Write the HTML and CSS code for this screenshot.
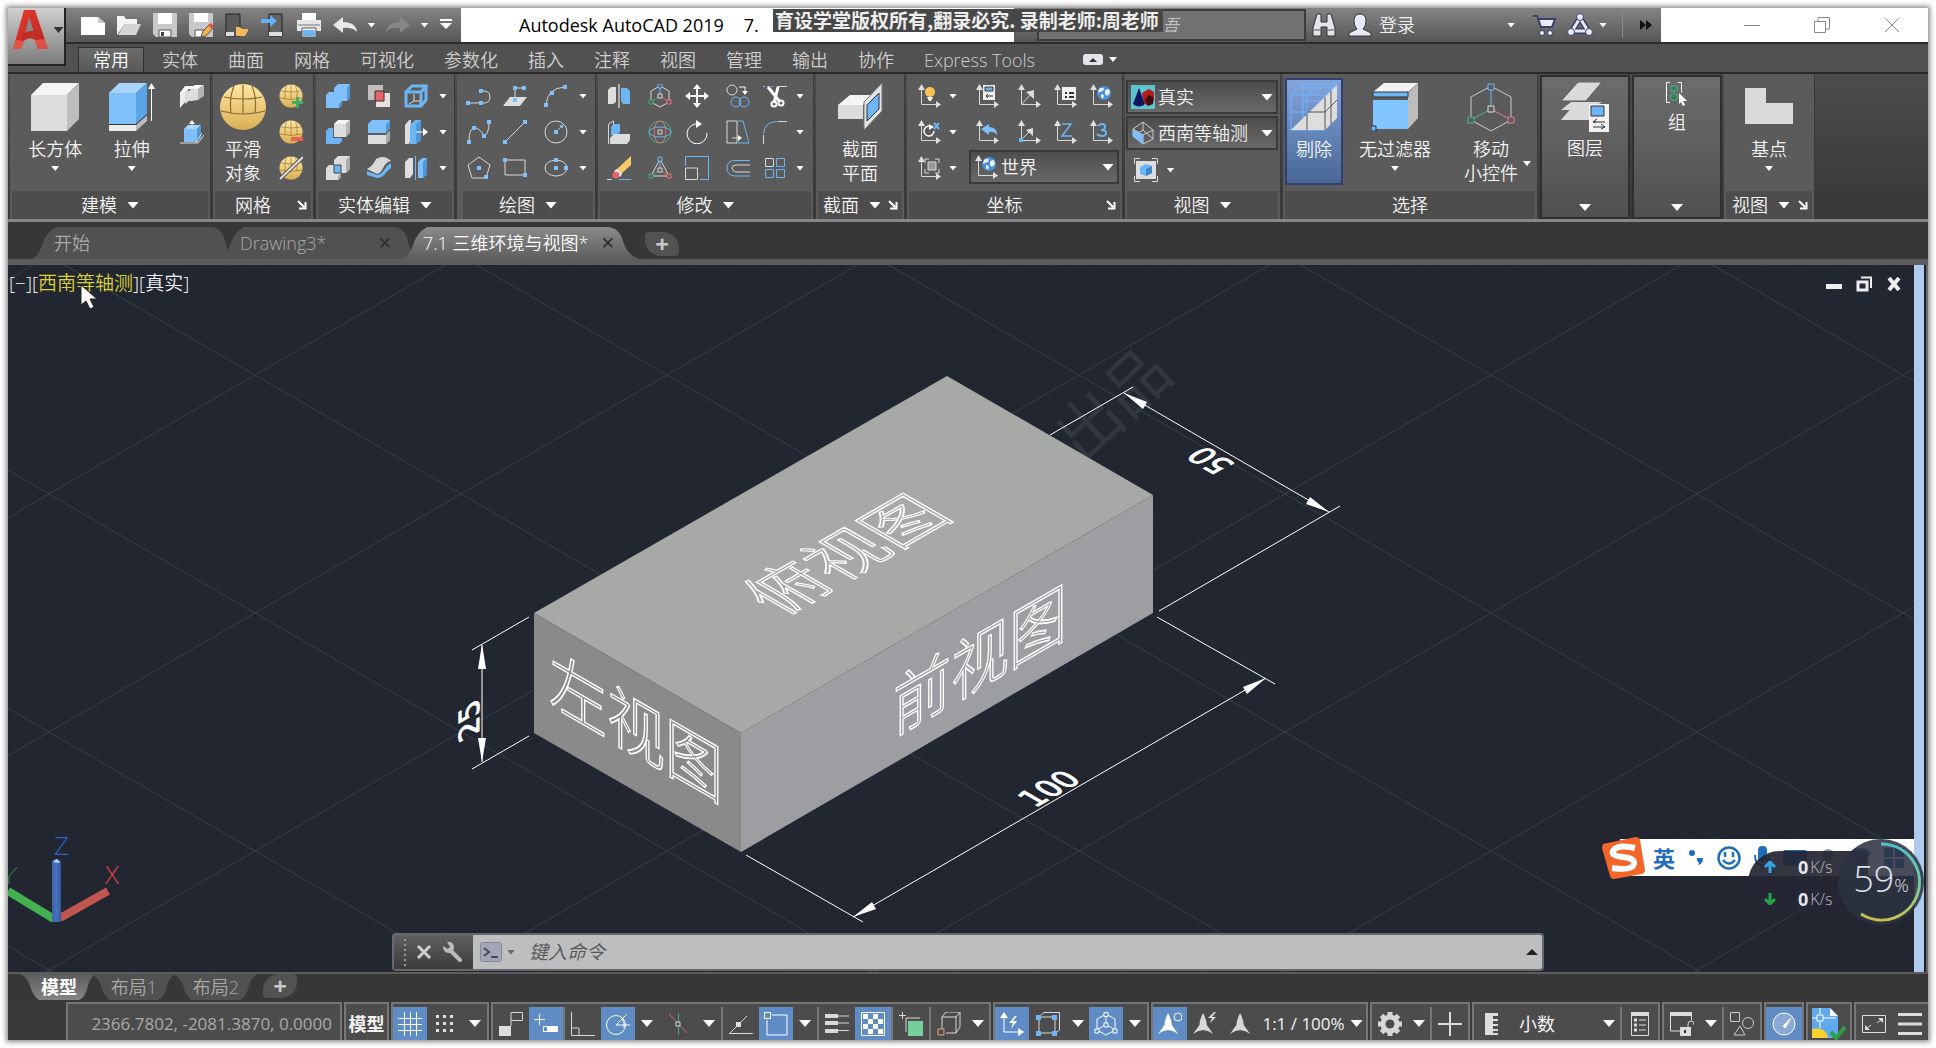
FILE: index.html
```html
<!DOCTYPE html>
<html lang="zh-CN">
<head>
<meta charset="utf-8">
<title>Autodesk AutoCAD 2019</title>
<link rel="stylesheet" href="styles.css">
</head>
<body>
<svg class="defs" aria-hidden="true">
  <defs>
    <linearGradient id="gold" x1="0" y1="0" x2="0" y2="1"><stop offset="0" stop-color="#ffe7a3"/><stop offset="1" stop-color="#d9ae52"/></linearGradient>
    <linearGradient id="redA" x1="0" y1="0" x2="1" y2="1"><stop offset="0" stop-color="#e8392d"/><stop offset="1" stop-color="#b3261e"/></linearGradient>
  </defs>
  <symbol id="sphere" viewBox="0 0 24 24"><circle cx="12" cy="12" r="11.5" fill="url(#gold)"/><g fill="none" stroke="#8a6c2c" stroke-width=".6"><path d="M1 14q11 3 22 0M2.500 7q9.500 2 19 0M12 1v14.500M7.500 1.500q-2.500 6-1.500 13.500M16.500 1.500q2.500 6 1.500 13.500"/></g></symbol>
  <symbol id="axes" viewBox="0 0 24 24"><path d="M4.500 4v16.500H20" fill="none" stroke="#d8d8d8"/><path d="M1 6l3.500-6L8 6zM19 17l5 3.500-5 3.500z" fill="#e0e0e0" stroke="none"/></symbol>
  <symbol id="globe" viewBox="0 0 14 14"><g stroke="none"><circle cx="7" cy="7" r="7" fill="#4a90d9"/><path d="M2 3q3-2 5-1l-1 3-3 1-2 1zM8 4l4-1 1 4-3 3-2-2zM4 8l3 1-1 4-2-2z" fill="#e8f2fc"/></g></symbol>
  <symbol id="launch" viewBox="0 0 10 10"><path d="M1 1l6 6M8.500 2v6.500H2" fill="none" stroke="#fff" stroke-width="2"/></symbol>
  <symbol id="annot" viewBox="0 0 24 24"><path d="M11 0q4 8 4 13l7 10q-5-4-11-4.500Q5 19 0 23l7-10q0-5 4-13z" fill="currentColor"/></symbol>
</svg>

<div class="window">
  <header class="top">
    <button class="app-btn" aria-label="应用程序菜单">
      <svg width="38" height="44" viewBox="0 0 38 44"><path d="M12 2h11l13 39H26l-3-9q-6-4-11 1l-3 8H1z" fill="url(#redA)"/><path d="M17 9l5 15q-5-1-9 3z" fill="#8a8a8a"/><path d="M9 28q8-8 17-4l3 10q-9-8-20-1z" fill="#c22e25"/><path d="M1 41l3-9 8 1-3 8zM26 41l-3-9 10-1 3 10z" fill="#f06a60" opacity=".6"/></svg>
      <i class="caret dark"></i>
    </button>
    <div class="titlebar">
      <nav class="qat" aria-label="快速访问工具栏">
        <button aria-label="新建"><svg width="24" height="24"><path d="M0 4h17l7 6v12H0z" fill="#fff"/><path d="M17 4v6h7z" fill="#ccc"/></svg></button>
        <button aria-label="打开"><svg width="24" height="24"><path d="M0 22V3h7l2 3h11v5H8z" fill="#f4f4f4"/><path d="M8 11h16l-5 11H1z" fill="#d4d4d4"/></svg></button>
        <button aria-label="保存"><svg width="24" height="24"><path d="M0 0h24v24H3l-3-3z" fill="#c9c9c9"/><path d="M5 0h14v11H5z" fill="#fff"/><path d="M6 17h12v7H6z" fill="#fff" stroke="#555"/><path d="M8 19h3v4H8z" fill="#444"/></svg></button>
        <button aria-label="另存为"><svg width="24" height="24"><path d="M0 0h24v24H3l-3-3z" fill="#c9c9c9"/><path d="M5 0h14v9H5z" fill="#fff"/><path d="M6 17h9v7H6z" fill="#fff" stroke="#555"/><path d="M12 24l2-6 6-6 4 3-7 8z" fill="#f2b04c" stroke="#555"/><path d="M19 12l3-2 3 3-2 3z" fill="#e0504a"/></svg></button>
        <button aria-label="从 Web 和 Mobile 中打开"><svg width="24" height="24"><path d="M1 1h14v22H1z" fill="#5a5a5a" stroke="#222"/><path d="M1 19h8v4H1z" fill="#ddd"/><path d="M11 23v-9h4l2 2h6v2l-3 5z" fill="#f0b95a"/></svg></button>
        <button aria-label="保存到 Web 和 Mobile"><svg width="24" height="24"><path d="M8 1h13v22H8z" fill="#636363" stroke="#222"/><path d="M8 19h13v4H8z" fill="#ddd"/><path d="M0 6h9V2l7 6-7 6v-4H0z" fill="#62b0f5"/></svg></button>
        <button aria-label="打印"><svg width="24" height="24"><path d="M5 0h14v8H5z" fill="#fff"/><path d="M0 7h24v11H0z" fill="#e6e6e6"/><path d="M1 12h22" stroke="#777"/><path d="M5 15h14v9H5z" fill="#fff" stroke="#555"/><path d="M6 17h12v6H6z" fill="#6fb5f3"/></svg></button>
        <button aria-label="放弃"><svg width="24" height="24"><path d="M0 12l10-8v5q13 0 14 10-5-5-14-4v5z" fill="#e8e8e8"/></svg></button>
        <button class="mini" aria-label="放弃列表"><i class="caret"></i></button>
        <button aria-label="重做"><svg width="24" height="24"><path d="M24 12L14 4v5Q1 9 0 19q5-5 14-4v5z" fill="#858585"/></svg></button>
        <button class="mini" aria-label="重做列表"><i class="caret"></i></button>
        <button class="mini" aria-label="自定义快速访问工具栏"><svg width="14" height="14"><path d="M1 2h12" stroke="#fff" stroke-width="2"/><path d="M1 5h12l-6 6z" fill="#fff"/></svg></button>
      </nav>
      <div class="caption">
        <span>Autodesk AutoCAD 2019</span><span>7.</span>
        <div class="mark">育设学堂版权所有,翻录必究. 录制老师:周老师</div>
      </div>
      <input class="search" aria-label="搜索" type="text" placeholder="吾">
      <div class="info">
        <button aria-label="搜索"><svg width="24" height="24"><path d="M5 1h4v8h6V1h4l4 14v8h-8v-9H9v9H1v-8z" fill="#e4e4ea" stroke="#333"/><path d="M2 17h6M16 17h6" stroke="#555"/></svg></button>
        <button class="login"><svg width="24" height="24"><path d="M12 1q6 0 6 7 0 5-3 8l8 4v3H1v-3l8-4q-3-3-3-8 0-7 6-7z" fill="#e8ebf3" stroke="#333"/></svg><span>登录</span><i class="caret"></i></button>
        <button aria-label="App Store"><svg width="24" height="24"><path d="M1 3h4l4 11h11l3-8H7" fill="#e8ebf8" stroke="#3a3f66" stroke-width="2"/><circle cx="10" cy="20" r="2.500" fill="#e8ebf8" stroke="#3a3f66"/><circle cx="18" cy="20" r="2.500" fill="#e8ebf8" stroke="#3a3f66"/></svg></button>
        <button class="a360" aria-label="保持连接"><svg width="26" height="24"><path d="M13 5L5 18h16z" fill="none" stroke="#3a3f66" stroke-width="6"/><path d="M13 5L5 18h16z" fill="none" stroke="#e8ebf8" stroke-width="3"/><g fill="#e8ebf8" stroke="#3a3f66"><circle cx="13" cy="4" r="3.500"/><circle cx="4" cy="19" r="3.500"/><circle cx="22" cy="19" r="3.500"/></g></svg><i class="caret"></i></button>
        <button class="more" aria-label="更多"><svg width="12" height="10"><path d="M0 0l6 5-6 5zM6 0l6 5-6 5z" fill="#111"/></svg></button>
      </div>
      <div class="winctl">
        <button aria-label="最小化"><svg width="16" height="16"><path d="M0 8.500h16" stroke="#888"/></svg></button>
        <button aria-label="还原"><svg width="16" height="16"><path d="M.500 4.500h11v11H.500zM4 4V.500h11.500V12h-4" fill="none" stroke="#888"/></svg></button>
        <button aria-label="关闭"><svg width="16" height="16"><path d="M1 1l14 14M15 1L1 15" stroke="#888"/></svg></button>
      </div>
    </div>
    <nav class="tabs">
      <button class="on">常用</button><button>实体</button><button>曲面</button><button>网格</button><button>可视化</button><button>参数化</button><button>插入</button><button>注释</button><button>视图</button><button>管理</button><button>输出</button><button>协作</button><button>Express Tools</button>
      <button class="fold" aria-label="最小化功能区"><svg width="20" height="12"><rect width="20" height="11" rx="3" fill="#e4e4ea"/><path d="M6 8l4-4 4 4z" fill="#333"/></svg><i class="caret"></i></button>
    </nav>
  </header>

  <main class="ribbon">
    <section class="panel p-model">
      <div class="body">
        <button class="big"><svg width="48" height="48"><path d="M0 12h36v36H0z" fill="#dcdcdc"/><path d="M0 12L12 0h36L36 12z" fill="#f4f4f4"/><path d="M36 12L48 0v36L36 48z" fill="#bdbdbd"/></svg><span>长方体</span><i class="caret"></i></button>
        <button class="big"><svg width="48" height="48"><path d="M1 10h27v31H1z" fill="#7fc0fb"/><path d="M1 10L11 0h28L28 10z" fill="#a8d5fd"/><path d="M28 10L39 0v31L28 41z" fill="#5ba4e6"/><path d="M1 42h27v6H1z" fill="#ececec"/><path d="M28 42l11-10v6L28 48z" fill="#bbb"/><path d="M1 41.500h27l11-10" stroke="#333" fill="none"/><path d="M43.500 38V4" stroke="#fff"/><path d="M40 6l3.500-6L47 6z" fill="#fff"/></svg><span>拉伸</span><i class="caret"></i></button>
        <div class="icons c1">
          <button aria-label="多段体"><svg width="24" height="24"><path d="M0 9l5-6v15l-5 6z" fill="#ececec"/><path d="M0 9l5-7h8l2-1h9l-6 4h-9l-4 4z" fill="#f6f6f6"/><path d="M5 7h4l2-2h7v11l-6 1H9l-4 3z" fill="#dcdcdc"/><path d="M18 5l6-4v11l-6 4z" fill="#b5b5b5"/></svg></button>
          <button aria-label="按住并拖动"><svg width="24" height="24"><path d="M4 9h13v13H4z" fill="#7fc0fb"/><path d="M4 9l4-4h13l-4 4z" fill="#a8d5fd"/><path d="M17 9l4-4v13l-4 4z" fill="#4f97d8"/><path d="M12 7V2M0 23h18l6-8M22 13l-6 10" stroke="#ddd" fill="none"/><path d="M9 4l3-4 3 4z" fill="#fff"/></svg></button>
        </div>
      </div>
      <h2>建模 <i class="caret lg"></i></h2>
    </section>

    <section class="panel p-mesh">
      <div class="body">
        <button class="big"><svg width="48" height="48"><use href="#sphere"/></svg><span>平滑<br>对象</span></button>
        <div class="icons c1">
          <button aria-label="提高平滑度"><svg width="24" height="24"><use href="#sphere"/><path d="M17 13h3v4h4v3h-4v4h-3v-4h-4v-3h4z" fill="#3fae68"/></svg></button>
          <button aria-label="降低平滑度"><svg width="24" height="24"><use href="#sphere"/><path d="M12 17h12v4H12z" fill="#e8604f"/></svg></button>
          <button aria-label="优化网格"><svg width="24" height="24"><use href="#sphere"/><path d="M1 23L24 1" stroke="#555" stroke-width="4"/><path d="M1 23L24 1" stroke="#ddd" stroke-width="2"/></svg></button>
        </div>
      </div>
      <h2 class="tight">网格 <svg class="launch" width="10" height="10"><use href="#launch"/></svg></h2>
    </section>

    <section class="panel p-solid">
      <div class="body">
        <div class="icons">
          <button aria-label="并集"><svg width="24" height="24"><path d="M8 4l4-4h12v14l-3 3h-5v4l-3 3H0V11l3-3h5z" fill="#7fc0fb"/><path d="M21 4l3-4v14l-3 3zM13 20l3-3v4l-3 3z" fill="#4f97d8"/></svg></button>
          <button aria-label="干涉"><svg width="24" height="24"><path d="M1 1h15v15H1z" fill="#c4bdbd"/><path d="M9 9h14v14H9z" fill="#e6e0e0"/><path d="M8 7h9v10H8z" fill="#e8636a" stroke="#333"/></svg></button>
          <button aria-label="抽壳"><svg width="24" height="24"><path d="M2 8h15v14H2zM2 8l6-6h14l-5 6M22 2v14l-5 6" fill="none" stroke="#6db5f5" stroke-width="3"/><path d="M10 10v7h6M10 17l-5 3" fill="none" stroke="#ddd"/></svg></button>
          <button class="mini" aria-label="更多"><i class="caret"></i></button>
          <button aria-label="差集"><svg width="24" height="24"><path d="M0 11l3-3h4v10h9v3l-3 3H0z" fill="#6db5f5"/><path d="M8 4h12v13H8z" fill="#ddd"/><path d="M8 4l4-4h12l-4 4z" fill="#f3f3f3"/><path d="M20 4l4-4v13l-4 4z" fill="#b5b5b5"/></svg></button>
          <button aria-label="剖切"><svg width="24" height="24"><path d="M1 4l4-4h18v8l-4 5H1z" fill="#7fc0fb"/><path d="M19 5l4-5v8l-4 5z" fill="#4f97d8"/><path d="M1 15h18l4-4v9l-4 4H1z" fill="#ddd"/><path d="M19 15l4-4v9l-4 4z" fill="#aaa"/></svg></button>
          <button aria-label="拉伸面"><svg width="24" height="24"><path d="M1 5l4-5h2v19l-2 5H1z" fill="#ddd"/><path d="M6 5l5-5h6v20l-5 4H6z" fill="#6db5f5"/><path d="M12 4l5-4v20l-5 4z" fill="#4f97d8"/><path d="M12 12h8" stroke="#fff"/><path d="M19 8l5 4-5 4z" fill="#fff"/></svg></button>
          <button class="mini" aria-label="更多"><i class="caret"></i></button>
          <button aria-label="交集"><svg width="24" height="24"><path d="M8 4l4-4h12v13l-4 4h-5v4l-3 3H0V12l3-3h5z" fill="#ddd"/><path d="M20 4l4-4v13l-4 4zM12 20l3-3v4l-3 3z" fill="#aaa"/><path d="M8 9h7v8H8z" fill="#6db5f5" stroke="#444"/></svg></button>
          <button aria-label="加厚"><svg width="24" height="24"><path d="M0 13Q6 10 9 3q8-5 15 2-5 1-8 7-2 5-6 6z" fill="#d8d8d8"/><path d="M0 15l10 4q5-1 8-6 2-4 6-6v5q-3 2-6 6-3 4-8 4L0 19z" fill="#6db5f5"/></svg></button>
          <button aria-label="三维镜像"><svg width="24" height="24"><path d="M1 6l4-4h4v16l-3 4H1z" fill="#ddd"/><path d="M14 6l4-4h5v16l-4 4h-5z" fill="#7fc0fb"/><path d="M19 6l4-4v16l-4 4z" fill="#4f97d8"/><path d="M11.500 0v24" stroke="#6db5f5"/></svg></button>
          <button class="mini" aria-label="更多"><i class="caret"></i></button>
        </div>
      </div>
      <h2>实体编辑 <i class="caret lg"></i></h2>
    </section>

    <section class="panel p-draw">
      <div class="body">
        <div class="icons line">
          <button aria-label="多段线"><svg width="26" height="24"><path d="M2 19h13M15 7q9-1 9 6t-9 6" /><g class="pt"><path d="M0 17h4v4H0zM13 17h4v4h-4zM13 5h4v4h-4z"/></g></svg></button>
          <button aria-label="三维多段线"><svg width="24" height="24"><path d="M0 22l7-9h17l-7 9z" fill="#ddd" stroke="none"/><path d="M12 17V4h8"/><g class="pt"><path d="M10 14h4v4h-4zM10 2h4v4h-4zM19 2h4v4h-4z"/></g></svg></button>
          <button aria-label="圆弧"><svg width="24" height="24"><path d="M2 21Q3 4 21 3"/><g class="pt"><path d="M0 19h4v4H0zM6 7h4v4H6zM19 1h4v4h-4z"/></g></svg></button>
          <button class="mini" aria-label="更多"><i class="caret"></i></button>
          <button aria-label="样条曲线"><svg width="24" height="24"><path d="M2 21Q2 9 7 8t10 8q5-2 5-14"/><g class="pt"><path d="M0 20h4v4H0zM5 6h4v4H5zM15 14h4v4h-4zM20 0h4v4h-4z"/></g></svg></button>
          <button aria-label="直线"><svg width="24" height="24"><path d="M2 22L22 2"/><g class="pt"><path d="M0 20h4v4H0zM20 0h4v4h-4z"/></g></svg></button>
          <button aria-label="圆"><svg width="24" height="24"><circle cx="12" cy="12" r="11"/><path d="M12 12l5-5" stroke="#7fc0fb"/><g class="pt"><path d="M10 10h4v4h-4zM15 5h4v4z"/></g></svg></button>
          <button class="mini" aria-label="更多"><i class="caret"></i></button>
          <button aria-label="多边形"><svg width="24" height="24"><path d="M12 1l11 8-4 13H5L1 9z"/><g class="pt"><path d="M10 10h4v4h-4zM17 19h4v4h-4z"/></g></svg></button>
          <button aria-label="矩形"><svg width="24" height="24"><path d="M2 4h20v15H2z"/><g class="pt"><path d="M0 2h4v4H0zM20 17h4v4h-4z"/></g></svg></button>
          <button aria-label="椭圆"><svg width="24" height="24"><ellipse cx="12" cy="12" rx="11" ry="8"/><g class="pt"><path d="M10 10h4v4h-4zM10 2h4v4h-4zM20 10h4v4h-4z"/></g></svg></button>
          <button class="mini" aria-label="更多"><i class="caret"></i></button>
        </div>
      </div>
      <h2>绘图 <i class="caret lg"></i></h2>
    </section>

    <section class="panel p-modify">
      <div class="body">
        <div class="icons line">
          <button aria-label="三维镜像"><svg width="24" height="24"><path d="M1 6l3-3h5v15l-3 2H1z" fill="#ddd" stroke="none"/><path d="M14 4h6l3 3v13h-7l-2-3z" fill="#6db5f5" stroke="none"/><path d="M12 0v24" stroke="#fff"/></svg></button>
          <button aria-label="三维移动"><svg width="24" height="24"><path d="M12 2l9 5v11l-9 5-9-5V7z"/><path d="M12 4v8" stroke="#6db5f5"/><path d="M12 12l-9 6" stroke="#3fae78"/><path d="M12 12l9 6" stroke="#e8707a"/><g fill="#5b5b5b"><path d="M10 0h4v4h-4z" stroke="#6db5f5"/><path d="M10 10h4v4h-4z"/><path d="M1 16h4v4H1z" stroke="#3fae78"/><path d="M19 16h4v4h-4z" stroke="#e8707a"/></g></svg></button>
          <button aria-label="移动"><svg width="24" height="24"><path d="M12 3v18M3 12h18" stroke="#fff" stroke-width="2"/><path d="M8 5l4-5 4 5zM8 19l4 5 4-5zM5 8l-5 4 5 4zM19 8l5 4-5 4z" fill="#fff" stroke="none"/></svg></button>
          <button aria-label="复制"><svg width="24" height="24"><circle cx="6" cy="6" r="5"/><g stroke="#6db5f5"><circle cx="10" cy="18" r="5"/><circle cx="18" cy="18" r="5"/></g><path d="M13 3h6v5" stroke="#fff"/><path d="M16 7h6l-3 4z" fill="#fff" stroke="none"/></svg></button>
          <button aria-label="修剪"><svg width="24" height="24"><path d="M0 2.500h12" stroke-dasharray="2 2" stroke="#6db5f5"/><path d="M14 2.500h10"/><path d="M5 3l12 15M15 3l-4 16" stroke="#fff" stroke-width="3"/><circle cx="11" cy="20" r="2.500" stroke="#fff" stroke-width="2"/><circle cx="18" cy="19" r="2.500" stroke="#fff" stroke-width="2"/></svg></button>
          <button class="mini" aria-label="更多"><i class="caret"></i></button>
          <button aria-label="三维对齐"><svg width="24" height="24"><path d="M1.500 24V4l5-3v10"/><path d="M4 7l3-3h6v8l-3 3H4z" fill="#6db5f5" stroke="none"/><path d="M3 18l4-4h16v6l-3 4H3z" fill="#ddd" stroke="none"/></svg></button>
          <button aria-label="三维旋转"><svg width="24" height="24"><circle cx="12" cy="12" r="11" stroke="#3fae78"/><ellipse cx="12" cy="12" rx="6" ry="11" stroke="#e8707a"/><ellipse cx="12" cy="12" rx="11" ry="5" stroke="#6db5f5"/><path d="M10 10h4v4h-4z" fill="#5b5b5b"/></svg></button>
          <button aria-label="旋转"><svg width="24" height="24"><path d="M14 4a10 10 0 1 0 8 9" stroke="#fff"/><path d="M11 0l6 4-6 4z" fill="#fff" stroke="none"/></svg></button>
          <button aria-label="拉伸"><svg width="24" height="24"><path d="M1 1h10v22H1zM6 18h8"/><path d="M12 1h5l6 22H12" stroke="#6db5f5"/><path d="M12 15l4 3-4 3z" fill="#fff" stroke="none"/></svg></button>
          <button aria-label="圆角"><svg width="24" height="24"><path d="M.500 24v-9M15 1.500h9"/><path d="M.500 14Q1 2 14 1.500" stroke="#6db5f5"/></svg></button>
          <button class="mini" aria-label="更多"><i class="caret"></i></button>
          <button aria-label="删除"><svg width="24" height="24"><path d="M0 23.500h5" /><path d="M12 23.500h12" stroke="#6db5f5"/><path d="M10 13L24 0v9L14 18z" fill="#f8c96b" stroke="none"/><path d="M7 15l3-2 5 5-2 3z" fill="#fff" stroke="none"/><circle cx="9" cy="19" r="3.500" fill="#e8636a" stroke="none"/></svg></button>
          <button aria-label="三维缩放"><svg width="24" height="24"><path d="M12 3l9 17H3z"/><path d="M12 4v8" stroke="#6db5f5"/><path d="M12 14l-9 6" stroke="#3fae78"/><path d="M12 14l9 6" stroke="#e8707a"/><g fill="#5b5b5b"><path d="M10 1h4v4h-4z" stroke="#6db5f5"/><path d="M10 12h4v4h-4z"/><path d="M1 18h4v4H1z" stroke="#3fae78"/><path d="M19 18h4v4h-4z" stroke="#e8707a"/></g></svg></button>
          <button aria-label="缩放"><svg width="24" height="24"><path d="M.500 10V.500h23v23H15" stroke="#6db5f5"/><path d="M.500 12h12v11.500H.500z"/></svg></button>
          <button aria-label="偏移"><svg width="24" height="24"><path d="M24 4.500H9q-8 0-8 7.500t8 8h15" stroke="#6db5f5"/><path d="M24 9H10q-4 0-4 3t4 4h14"/></svg></button>
          <button aria-label="阵列"><svg width="24" height="24"><path d="M2.500 2.500h8v8h-8z"/><path d="M13.500 2.500h8v8h-8zM2.500 13.500h8v8h-8zM13.500 13.500h8v8h-8z" stroke="#6db5f5"/></svg></button>
          <button class="mini" aria-label="更多"><i class="caret"></i></button>
        </div>
      </div>
      <h2>修改 <i class="caret lg"></i></h2>
    </section>

    <section class="panel p-section">
      <div class="body">
        <button class="big"><svg width="48" height="48"><path d="M2 22h25v14H2z" fill="#dcdcdc"/><path d="M2 22l12-10h22l-9 10z" fill="#f4f4f4"/><path d="M28 19L46 0v28L28 47z" fill="#e2e2e2" stroke="#777"/><path d="M31 22l12-12v16L31 38z" fill="#6db5f5" stroke="#333"/></svg><span>截面<br>平面</span></button>
      </div>
      <h2>截面 <i class="caret lg"></i> <svg class="launch" width="10" height="10"><use href="#launch"/></svg></h2>
    </section>

    <section class="panel p-ucs">
      <div class="body">
        <div class="icons line">
          <button aria-label="UCS 图标特性"><svg width="24" height="24"><use href="#axes"/><circle cx="13" cy="8" r="5" fill="#f8c258" stroke="none"/><path d="M10 13h6l-2 4h-2z" fill="#fff" stroke="none"/></svg></button>
          <button class="mini" aria-label="更多"><i class="caret"></i></button>
          <button aria-label="UCS"><svg width="24" height="24"><use href="#axes"/><path d="M8 1h12v15H8z" fill="#f0f0f0" stroke="none"/><path d="M10 3h8v4h-8z" fill="#6db5f5" stroke="#333"/><path d="M11 12h7M13 10l-2 2 2 2" stroke="#333"/></svg></button>
          <button aria-label="原点"><svg width="24" height="24"><use href="#axes"/><path d="M5 20L14 10"/><path d="M17 6v9l-8-7z" fill="#ddd" stroke="none"/></svg></button>
          <button aria-label="命名 UCS"><svg width="24" height="24"><use href="#axes"/><path d="M9 3h14v13H9z" fill="#f0f0f0" stroke="none"/><path d="M12 9h2M16 9h5M12 13h2M16 13h5" stroke="#333" stroke-width="2"/></svg></button>
          <button aria-label="世界 UCS"><svg width="24" height="24"><use href="#axes"/><use href="#globe" x="8" y="2" width="14" height="14"/></svg></button>
          <button aria-label="X"><svg width="24" height="24"><use href="#axes"/><path d="M15 7a5 5 0 1 0 2 4" stroke="#fff" stroke-width="1.500"/><path d="M12 4l5 3-5 3z" fill="#fff" stroke="none"/><path d="M17 3l5 6M22 3l-5 6" stroke="#6db5f5" stroke-width="2"/></svg></button>
          <button class="mini" aria-label="更多"><i class="caret"></i></button>
          <button aria-label="上一个"><svg width="24" height="24"><use href="#axes"/><path d="M6 9l8-5v3q8 0 8 8-3-4-8-3v3z" fill="#7fc0fb" stroke="none"/></svg></button>
          <button aria-label="三点"><svg width="24" height="24"><use href="#axes"/><path d="M6 18l8-8"/><path d="M16 8v8l-7-6z" fill="#ddd" stroke="none"/><path d="M2 18h4v4H2z" fill="#6db5f5" stroke="none"/></svg></button>
          <button aria-label="Z 轴矢量"><svg width="24" height="24"><use href="#axes"/><path d="M9 4h9l-9 12h10" stroke="#6db5f5" stroke-width="1.500"/></svg></button>
          <button aria-label="三点 UCS"><svg width="24" height="24"><use href="#axes"/><path d="M9 6q2-2 4-2 3 0 3 3t-4 3q5 0 5 3t-4 3q-3 0-5-2" stroke="#6db5f5" stroke-width="2"/></svg></button>
          <button aria-label="视图 UCS"><svg width="24" height="24"><use href="#axes"/><path d="M11 6h8v8h-8z" fill="#999"/><path d="M8 7V3h4M18 3h4v4M22 13v4h-4M12 17H8v-4"/></svg></button>
          <button class="mini" aria-label="更多"><i class="caret"></i></button>
          <label class="combo world"><svg width="24" height="24"><use href="#axes"/><use href="#globe" x="8" y="2" width="14" height="14"/></svg><select aria-label="UCS"><option>世界</option></select><i class="caret lg"></i></label>
        </div>
      </div>
      <h2 class="tight">坐标 <svg class="launch" width="10" height="10"><use href="#launch"/></svg></h2>
    </section>

    <section class="panel p-view">
      <div class="body stack">
        <label class="combo"><svg width="24" height="24"><path d="M0 0h24v24H0z" fill="#5cc4cf"/><path d="M8 3l6 16q-6 5-12 0z" fill="#0b1660"/><path d="M11 8l7-4 5 3v9l-6 5-4-3z" fill="#b51a1a"/><path d="M14 15l4-5 4 2v7l-5 2z" fill="#3b1010"/></svg><select aria-label="视觉样式"><option>真实</option></select><i class="caret lg"></i></label>
        <label class="combo"><svg width="24" height="24"><path d="M12 1l10 8v9l-10 5L2 15V8zM2 8l10 6 10-5M12 14v9M12 1v8L2 15M12 9l10 9" fill="none" stroke="#ccc"/><path d="M2 8l10 6v9L2 16z" fill="#7fc0fb"/></svg><select aria-label="视图"><option>西南等轴测</option></select><i class="caret lg"></i></label>
        <button class="vp" aria-label="视口"><svg width="24" height="24"><path d="M2 3h20v18H2z" fill="#ddd"/><path d="M.500 6V.500H6M18 .500h5.500V6M23.500 18v5.500H18M6 23.500H.500V18" fill="none" stroke="#ddd"/><path d="M6 9l6-3 6 2v7l-6 3-6-2z" fill="#6db5f5"/><path d="M12 11l6-3v7l-6 3z" fill="#3f86c8"/></svg><i class="caret"></i></button>
      </div>
      <h2>视图 <i class="caret lg"></i></h2>
    </section>

    <section class="panel p-select">
      <div class="body">
        <button class="big on"><svg width="48" height="48"><path d="M1 12h34v35H1zM1 12L13 1h34L35 12M1 29h34M17 12v35M17 12L29 1M8 5h35M13 1v35L1 47M13 18h24" fill="none" stroke="#6fb8ff"/><path d="M1 47L47 2v33L35 47z" fill="#dedede"/><path d="M17 31v16M35 14v33M17 29h18L47 17M41 8v33" stroke="#555" fill="none"/></svg><span>剔除</span></button>
        <button class="big"><svg width="48" height="48"><path d="M2 9L13 0h34L37 9z" fill="#f2f2f2"/><path d="M37 10L47 0v35L37 46z" fill="#bdbdbd"/><path d="M2 9h35v5H2z" fill="#6db5f5" stroke="#333"/><path d="M2 17h35v29H2z" fill="#82c4fd"/><path d="M0 43h5v5H0z" fill="#6db5f5" stroke="#234"/></svg><span>无过滤器</span><i class="caret"></i></button>
        <button class="big gizmo"><svg width="48" height="48"><path d="M24 3l20 11v23L24 48 4 37V14z" fill="none" stroke="#ccc"/><path d="M24 6v18" stroke="#6db5f5"/><path d="M24 26L4 37" stroke="#4fb58a"/><path d="M24 26l20 11" stroke="#e8808a"/><g fill="#5b5b5b"><path d="M21 1h6v6h-6z" stroke="#6db5f5"/><path d="M21 23h6v6h-6z" stroke="#ddd"/><path d="M1 34h6v6H1z" stroke="#4fb58a"/><path d="M41 34h6v6h-6z" stroke="#e8808a"/></g></svg><span>移动<br>小控件</span><i class="caret"></i></button>
      </div>
      <h2>选择</h2>
    </section>

    <button class="panel folded">
      <svg width="48" height="50"><g fill="#dadada"><path d="M0 38l12-14h29L28 38zM0 28l10-8h31L28 28z"/><path d="M0 19L17 0h24L25 19z" stroke="#5b5b5b"/></g><path d="M28 22h20v28H28z" fill="#f2f2f2"/><path d="M30 24h13v10H30z" fill="#6db5f5" stroke="#333"/><path d="M32 40h12M36 37l-4 3 3 0M32 45h12M40 42l4 3-4 2" stroke="#333" fill="none"/></svg><span>图层</span><i class="caret lg"></i>
    </button>
    <button class="panel folded">
      <svg width="22" height="24"><path d="M4 .500H.500v20H4M12 .500h3.500v10" fill="none" stroke="#fff"/><path d="M5 4h6v5H5z" fill="#3d7a5a" stroke="#4fb583"/><circle cx="8" cy="15" r="3.500" fill="#3d7a5a" stroke="#4fb583"/><path d="M13 11l8 8h-4l2 4-2 1-2-4-2 2z" fill="#fff"/></svg><span>组</span><i class="caret lg"></i>
    </button>
    <section class="panel p-base">
      <div class="body">
        <button class="big"><svg width="48" height="48"><path d="M0 5h21v15h27v21H0z" fill="#dadada"/></svg><span>基点</span><i class="caret"></i></button>
      </div>
      <h2>视图 <i class="caret lg"></i> <svg class="launch" width="10" height="10"><use href="#launch"/></svg></h2>
    </section>
  </main>

  <nav class="doctabs">
    <a href="#start" class="dt first">开始</a>
    <a href="#d3" class="dt second">Drawing3*<b>✕</b></a>
    <a href="#d7" class="dt third on">7.1 三维环境与视图*<b>✕</b></a>
    <button class="plus" aria-label="新图形">+</button>
  </nav>

  <div class="view">
    <svg class="canvas" viewBox="8 265 1906 707" preserveAspectRatio="xMidYMid slice" role="img" aria-label="长方体三维模型">
      <defs>
        <pattern id="major" patternUnits="userSpaceOnUse" x="255" y="851" width="412" height="238"><path d="M0 0l412 238M412 0L0 238" stroke="#353d49" fill="none"/></pattern>
        <pattern id="minor" patternUnits="userSpaceOnUse" x="255" y="851" width="82.4" height="47.6"><path d="M0 0l82.4 47.6M82.4 0L0 47.6" stroke="#242a36" fill="none"/></pattern>
        <linearGradient id="bz"><stop offset="0" stop-color="#3d65a8"/><stop offset=".5" stop-color="#4772bd"/><stop offset="1" stop-color="#3358a0"/></linearGradient>
      </defs>
      <rect x="8" y="265" width="1906" height="707" fill="#212631"/>
      <rect x="8" y="265" width="1906" height="707" fill="url(#minor)"/>
      <rect x="8" y="265" width="1906" height="707" fill="url(#major)"/>
      <text class="ghost" transform="translate(1082 464) rotate(-43)">出品</text>
      <path d="M534 613L947 376l206 119-412 238z" fill="#a6a9a6"/>
      <path d="M741 733l412-238v118L741 852z" fill="#9d9ea1"/>
      <path d="M534 613l207 120v119L534 733z" fill="#8a8a8a"/>
      <g class="face">
        <text transform="matrix(.866 .5 0 1 549 702)">左视图</text>
        <text transform="matrix(.866 -.5 0 1 893 735)">前视图</text>
        <text transform="matrix(.866 -.5 .866 .5 780 617)">俯视图</text>
      </g>
      <g stroke="#fff" fill="#fff">
        <path d="M472 650l57-33M472 769l57-33M482 645v117M746 855l117 67M1157 617l118 67M853 917l413-239M1050 435l83-48M1159 611l181-105M1124 393l205 119" fill="none"/>
        <g stroke="none">
          <path d="M482 644l4 25h-8zM482 762l4-24h-8zM853 917l19-15 4 7zM1266 678l-23 9 4 7zM1124 393l23 9-4 7zM1329 512l-19-15-4 7z"/>
        </g>
      </g>
      <g class="dim">
        <text transform="matrix(0 -1 .866 -.5 479 733)">25</text>
        <text transform="matrix(.866 -.5 .866 .5 1035 808)">100</text>
        <text transform="matrix(-.866 -.5 .866 -.5 1236 464)">50</text>
      </g>
      <path d="M8 891l46 28" stroke="#45b052" stroke-width="8"/>
      <path d="M60 918l48-27" stroke="#c0564f" stroke-width="8"/>
      <path d="M52 861q4-4 9 0v61h-9z" fill="url(#bz)"/><path d="M53 862l4-3 3 4z" fill="#bcdcff"/>
      <path d="M17 867l-8 9v8" stroke="#2f9a3e" fill="none"/>
      <text class="axis" x="54" y="855" fill="#2c62c4">Z</text>
      <text class="axis" x="105" y="884" fill="#d8433b">X</text>
    </svg>
    <div class="edge"></div>
    <div class="vlabel"><button>[−]</button><button class="hot">[<em>西南等轴测</em>]</button><button>[真实]</button></div>
    <div class="vctl">
      <button aria-label="最小化"><svg width="16" height="16"><path d="M0 8h16v5H0z" fill="#eee"/></svg></button>
      <button aria-label="还原"><svg width="16" height="16"><path d="M2 6h9v8H2z" fill="none" stroke="#eee" stroke-width="3"/><path d="M5 1.500h10V12" fill="none" stroke="#eee" stroke-width="2"/></svg></button>
      <button aria-label="关闭"><svg width="16" height="16"><path d="M3 2l10 12M13 2L3 14" stroke="#eee" stroke-width="4"/></svg></button>
    </div>
    <svg class="cursor" width="20" height="26"><path d="M1 1v20l5-4 4 8 4-2-4-8h7z" fill="#fff" stroke="#222"/></svg>

    <form class="cmd">
      <div class="cmd-tools">
        <svg width="4" height="28"><path d="M2 1v27" stroke="#999" stroke-width="2" stroke-dasharray="2 3"/></svg>
        <button type="button" aria-label="关闭"><svg width="16" height="14"><path d="M2 1l12 12M14 1L2 13" stroke="#ccc" stroke-width="3"/></svg></button>
        <button type="button" aria-label="自定义"><svg width="22" height="22"><path d="M9 9l10 10" stroke="#bbb" stroke-width="4" stroke-linecap="round"/><path d="M2 5l5 3 2-2-3-5q6-1 7 5 0 6-6 6-5-1-5-7z" fill="#bbb"/></svg></button>
      </div>
      <button type="button" class="prompt" aria-label="最近使用的命令"><svg width="22" height="20"><rect x=".500" y=".500" width="21" height="19" rx="2" fill="#a3a7b5" stroke="#84889a"/><path d="M4 6l5 4-5 4M11 15h7" stroke="#444a5c" stroke-width="2" fill="none"/></svg><i class="caret grayc"></i></button>
      <input type="text" placeholder="键入命令" aria-label="命令">
      <button type="button" class="hist" aria-label="命令历史"><svg width="12" height="6"><path d="M0 6l6-6 6 6z" fill="#222"/></svg></button>
    </form>

    <div class="ime">
      <svg class="sogou" width="44" height="44"><path d="M1 8L34 1q3 0 4 3l5 30q0 3-3 4L12 43q-3 0-4-3L0 12z" fill="#f2662a"/><path d="M33 12q-18-4-22 3-2 5 10 6t11 7q-2 7-22 4" fill="none" stroke="#fff" stroke-width="6"/></svg>
      <b>英</b>
      <svg width="16" height="18"><circle cx="4" cy="4" r="3" fill="#1f6dbb"/><path d="M9 9h6q0 6-5 7 2-3-1-4z" fill="#1f6dbb"/></svg>
      <svg width="24" height="24"><circle cx="12" cy="12" r="10.500" fill="none" stroke="#1f6dbb" stroke-width="2.500"/><path d="M8 6v5M16 6v5M6 14q6 7 12 0" stroke="#1f6dbb" stroke-width="2.500" fill="none"/></svg>
      <svg width="16" height="24"><rect x="4" width="9" height="16" rx="4" fill="#1f6dbb"/><path d="M1 9q0 10 7 10t7-10M8 19v5" stroke="#1f6dbb" stroke-width="2" fill="none"/></svg>
      <svg width="24" height="16"><rect width="24" height="16" rx="2" fill="#1f6dbb"/></svg>
      <svg width="16" height="22"><circle cx="8" cy="8" r="6" fill="#999"/></svg>
      <svg width="22" height="22"><path d="M6 1h10l6 5-3 4-2-1v12H5V9l-2 1-3-4z" fill="#1f6dbb"/></svg>
      <svg width="20" height="20"><path d="M0 0h9v9H0zM11 0h9v9h-9zM0 11h9v9H0zM11 11h9v9h-9z" fill="#1f6dbb"/></svg>
    </div>
    <div class="net">
      <p><svg width="12" height="12"><path d="M6 12V2M1 6l5-5 5 5" stroke="#37a6e8" stroke-width="3" fill="none"/></svg><b>0</b><span>K/s</span></p>
      <p><svg width="12" height="12"><path d="M6 0v10M1 6l5 5 5-5" stroke="#28a34a" stroke-width="3" fill="none"/></svg><b>0</b><span>K/s</span></p>
    </div>
    <div class="load"><svg width="88" height="88"><defs><linearGradient id="arc" x1="0" y1="0" x2="0" y2="1"><stop offset="0" stop-color="#4fc3d0"/><stop offset=".5" stop-color="#6fcf9f"/><stop offset="1" stop-color="#c8c050"/></linearGradient></defs><circle cx="44" cy="44" r="43" fill="#2d3140" fill-opacity=".87"/><path d="M44 6a38 38 0 1 1-20 70" fill="none" stroke="url(#arc)" stroke-width="3"/></svg><p>59<small>%</small></p></div>
  </div>

  <nav class="layouts">
    <a href="#model" class="on">模型</a><a href="#l1">布局1</a><a href="#l2">布局2</a><button aria-label="新建布局">+</button>
  </nav>

  <footer class="status">
    <div class="grp coords">2366.7802, -2081.3870, 0.0000</div>
    <div class="grp"><button class="txt">模型</button></div>
    <div class="grp">
      <button class="on" aria-label="栅格"><svg width="24" height="24"><path d="M0 6.500h24M0 12.500h24M0 18.500h24M6.500 0v24M12.500 0v24M18.500 0v24" stroke="#fff"/></svg></button>
      <button class="w36" aria-label="捕捉"><svg width="18" height="18"><path d="M1.500 0v18M8.500 0v18M15.500 0v18" stroke="#e0e0e0" stroke-width="3" stroke-dasharray="3 4"/></svg></button>
      <button class="w24" aria-label="更多"><i class="caret lg"></i></button>
    </div>
    <div class="grp line">
      <button class="w36" aria-label="推断约束"><svg width="24" height="24"><path d="M0 14h12v10H0z" fill="#ddd" stroke="none"/><path d="M12 14V.500h11.500v8H12"/></svg></button>
      <button class="on" aria-label="动态输入"><svg width="24" height="24"><path d="M5.500 2v11M0 7.500h11" stroke="#fff"/><path d="M9 14h15v6H9z" fill="#fff" stroke="none"/><path d="M10 15h3v4h-3z" fill="#5f8cc4" stroke="none"/></svg></button>
      <button class="w38 sepl" aria-label="正交"><svg width="24" height="24"><path d="M.500 0v23.500H24M1 16h7v7"/></svg></button>
      <button class="on" aria-label="极轴"><svg width="24" height="24"><circle cx="10" cy="13" r="9.500" stroke="#fff"/><path d="M21 2L10 13h14M16 7q3 3 2 9" stroke="#fff"/></svg></button>
      <button class="w24" aria-label="更多"><i class="caret lg"></i></button>
      <button class="w38" aria-label="等轴测草图"><svg width="20" height="22"><path d="M1 1l18 19" stroke="#d06a70"/><path d="M10.500 0v22" stroke="#3fae78"/><path d="M8 9h4v4H8z" fill="#4c4c4c"/></svg></button>
      <button class="w24" aria-label="更多"><i class="caret lg"></i></button>
      <button class="w38 sepl" aria-label="对象捕捉追踪"><svg width="24" height="24"><path d="M0 21.500h24M1 21L18 4"/><path d="M7 10h5v5H7z" fill="#ddd" stroke="none"/></svg></button>
      <button class="on" aria-label="对象捕捉"><svg width="24" height="24"><path d="M8 3h15v20H3V8" stroke="#fff"/><path d="M.500.500h6v6h-6z" stroke="#fff"/></svg></button>
      <button class="w24" aria-label="更多"><i class="caret lg"></i></button>
      <button class="w38 sepl" aria-label="线宽"><svg width="24" height="24"><path d="M0 4h24M0 11h24M0 18.500h24"/><path d="M0 4h13M0 11h13M0 19h13" stroke-width="4"/></svg></button>
      <button class="on w36" aria-label="透明度"><svg width="24" height="24"><path d="M.500.500h23v23H.500z" stroke="#fff"/><path d="M2 2h5v5H2zM12 2h5v5h-5zM7 7h5v5H7zM17 7h5v5h-5zM2 12h5v5H2zM12 12h5v5h-5zM7 17h5v5H7zM17 17h5v5h-5z" fill="#fff" stroke="none"/></svg></button>
      <button class="w38 sepl" aria-label="选择循环"><svg width="24" height="24"><path d="M3.500 0v7M0 3.500h7M7 20V6h14"/><path d="M9 9h15v15H9z" fill="#76cf9b" stroke="none"/></svg></button>
      <button class="w38 sepl" aria-label="三维对象捕捉"><svg width="24" height="24"><path d="M5 17V5h14v16H9M5 5l4-5h14l-4 5M23 0v15l-4 6"/><path d="M1 17h6v6H1z" stroke="#e8a080"/></svg></button>
      <button class="w22" aria-label="更多"><i class="caret lg"></i></button>
    </div>
    <div class="grp line">
      <button class="on" aria-label="动态 UCS"><svg width="24" height="24"><path d="M4 3v17h17" stroke="#fff"/><path d="M0 6l4-6 4 6zM18 16l6 4-6 4zM15 4l-6 7h4l-2 6 6-8h-4l4-5z" fill="#fff" stroke="none"/></svg></button>
      <button class="w38" aria-label="选择过滤"><svg width="24" height="24"><path d="M3 5h16v16H3zM3 5l5-4.500h15.500V18L19 22" /><path d="M0 3h5v5H0zM16 3h5v5h-5zM0 19h5v5H0zM16 19h5v5h-5z" fill="#6db5f5" stroke="none"/></svg></button>
      <button class="w22" aria-label="更多"><i class="caret lg"></i></button>
      <button class="on" aria-label="小控件"><svg width="24" height="24"><g stroke="#fff"><path d="M12 2l9 5v11l-9 5-9-5V7zM12 4v8l-9 6M12 12l9 6"/><path d="M10 .500h4v4h-4zM10 11h4v4h-4zM1 17h4v4H1zM19 17h4v4h-4z" fill="#5f8cc4"/></g></svg></button>
      <button class="w24" aria-label="更多"><i class="caret lg"></i></button>
    </div>
    <div class="grp">
      <button class="on" aria-label="注释可见性"><svg width="24" height="24" color="#fff"><use href="#annot" width="22"/><circle cx="20" cy="5" r="4" fill="none" stroke="#fff"/></svg></button>
      <button class="w36" aria-label="自动缩放"><svg width="24" height="24" color="#d8d8d8"><use href="#annot" width="22"/><path d="M21 0l-6 6h4l-2 5 6-6h-4l4-5z" fill="#ddd"/></svg></button>
      <button class="w36" aria-label="注释"><svg width="22" height="24" color="#d8d8d8"><use href="#annot" width="22"/></svg></button>
      <button class="scale">1:1 / 100% <i class="caret lg"></i></button>
    </div>
    <div class="grp">
      <button class="w36" aria-label="切换工作空间"><svg width="24" height="24"><circle cx="12" cy="12" r="7" fill="none" stroke="#d8d8d8" stroke-width="5"/><path d="M12 0v4M12 20v4M0 12h4M20 12h4M3.500 3.500l3 3M17.500 17.500l3 3M3.500 20.500l3-3M17.500 6.500l3-3" stroke="#d8d8d8" stroke-width="5"/></svg></button>
      <button class="w22" aria-label="更多"><i class="caret lg"></i></button>
      <button class="w38 sepl" aria-label="注释监视器"><svg width="24" height="24"><path d="M12 0v24M0 12h24" stroke="#ddd" stroke-width="2"/></svg></button>
    </div>
    <div class="grp">
      <label class="units"><svg width="14" height="22"><path d="M0 0h13v3H8v3h5v2H8v3h5v2H8v3h5v2H8v2h5v2H0z" fill="#ddd"/></svg><select aria-label="单位"><option>小数</option></select><i class="caret lg"></i></label>
      <button class="w38 sepl" aria-label="快捷特性"><svg width="18" height="24"><path d="M.500.500h17v23H.500z" fill="none" stroke="#ddd"/><path d="M0 0h18v4H0z" fill="#ddd"/><path d="M3 8h3M3 13h3M3 18h3" stroke="#ddd" stroke-width="3"/><path d="M8 8h7M8 13h7M8 18h7" stroke="#ddd"/></svg></button>
    </div>
    <div class="grp">
      <button class="w36" aria-label="锁定用户界面"><svg width="24" height="24"><path d="M10 19H.500V.500h21V8" fill="none" stroke="#ddd"/><path d="M0 0h22v4H0zM10 15h11v9H10z" fill="#ddd"/><path d="M18 15v-3q0-3 3-3t3 3v1" fill="none" stroke="#ddd"/><path d="M15 18v3" stroke="#333" stroke-width="2"/></svg></button>
      <button class="w22" aria-label="更多"><i class="caret lg"></i></button>
      <button class="w38 sepl" aria-label="隔离对象"><svg width="24" height="24"><path d="M.500.500h9v9h-9zM10 14l5 9H4z" fill="none" stroke="#ccc"/><circle cx="18" cy="11" r="5.500" fill="none" stroke="#ccc"/></svg></button>
    </div>
    <div class="grp"><button class="on w36" aria-label="硬件加速"><svg width="24" height="24"><circle cx="12" cy="12" r="11" fill="#8aaad4" stroke="#fff"/><path d="M11 14l8-8-6 10z" fill="#fff" stroke="#fff"/></svg></button></div>
    <div class="grp"><button class="trust" aria-label="受信任的 DWG"><svg width="34" height="32"><path d="M0 0h18l8 8v22H0z" fill="#5fa9ec"/><path d="M18 0v8h8z" fill="#fff"/><path d="M0 21q14-3 16 9H0z" fill="#f7d22e"/><path d="M8 0v20M0 10h24" stroke="#fff"/><path d="M5 7h6v6H5z" fill="#5fa9ec" stroke="#fff"/><path d="M19 24l5 6 9-11" fill="none" stroke="#2d9c4b" stroke-width="4"/></svg></button></div>
    <div class="grp last">
      <button class="w36" aria-label="全屏显示"><svg width="24" height="18"><path d="M.500.500h23v17H.500z" fill="none" stroke="#ddd"/><path d="M3 10v5h5zM21 8V3h-5z" fill="#ddd"/><path d="M4 14l5-4M20 4l-5 4" stroke="#ddd"/></svg></button>
      <button class="w36" aria-label="自定义"><svg width="24" height="22"><path d="M0 1.500h24M0 11h24M0 20.500h24" stroke="#ddd" stroke-width="3"/></svg></button>
    </div>
  </footer>
</div>
</body>
</html>
```
FILE: styles.css
```css
* { box-sizing: border-box; }
body {
  margin: 0;
  padding: 8px;
  min-height: 100vh;
  display: flex;
  background: #fff;
  font: 350 18px/24px "Open Sans", "Noto Sans CJK SC", sans-serif;
  color: #f2f2f2;
}
button, input, select, a { font: inherit; color: inherit; }
button { border: 0; padding: 0; margin: 0; background: none; display: flex; align-items: center; justify-content: center; }
a { text-decoration: none; }
p, h2 { margin: 0; }
svg { display: block; flex: none; }
.defs { position: absolute; width: 0; height: 0; }

.window {
  flex: 1;
  min-width: 0;
  display: flex;
  flex-direction: column;
  background: #383838;
  box-shadow: 0 0 5px 2px #8c8c8e;
}

.caret {
  width: 8px;
  height: 5px;
  flex: none;
  background: #fff;
  clip-path: polygon(0 0, 100% 0, 50% 100%);
}
.caret.lg { width: 12px; height: 7px; }
.caret.dark { width: 10px; height: 6px; background: #333; }
.caret.grayc { background: #666; }

/* Title bar and ribbon tabs */
.top {
  display: grid;
  grid-template-columns: 58px 1fr;
  grid-template-rows: 36px 28px;
  background: #515151;
  border-bottom: 2px solid #2a2a2a;
}
.app-btn {
  grid-row: 1 / 3;
  height: 58px;
  gap: 4px;
  padding: 0 2px 12px 5px;
  background: linear-gradient(#cfcfcf, #7c7c7c);
  border: 1px solid #222;
  border-width: 0 2px 2px 0;
}
.titlebar {
  display: flex;
  align-items: stretch;
  background: linear-gradient(#848484, #565656);
  border-bottom: 2px solid #2c2c2c;
}
.qat { display: flex; padding-left: 9px; width: 395px; }
.qat button { width: 36px; }
.qat .mini { width: 17px; }
.qat .mini:last-child { width: 26px; }
.caption {
  flex: 1 1 553px;
  position: relative;
  min-width: 0;
  display: flex;
  align-items: center;
  gap: 20px;
  padding-left: 58px;
  background: #fff;
  color: #000;
  font-weight: 400;
  white-space: nowrap;
}
.mark {
  position: absolute;
  left: 312px;
  top: 1px;
  width: 390px;
  height: 23px;
  background: #474747;
  color: #eee;
  font: 700 19px/22px "Noto Sans CJK SC", sans-serif;
  padding-left: 2px;
}
.search {
  flex: 0 1 269px;
  margin: 1px 0 1px 23px;
  padding: 0 0 0 124px;
  border: 2px solid #3c3c3c;
  background: #727272;
  min-width: 0;
  font-size: 16px;
  font-style: italic;
}
.search::placeholder { color: #ccc; opacity: 1; }
.info { display: flex; align-items: center; flex: none; width: 355px; padding-left: 6px; }
.login { margin-left: 12px; gap: 7px; white-space: nowrap; }
.login .caret { margin: 0 17px 0 85px; }
.a360 { gap: 6px; margin-left: 11px; padding-right: 15px; border-right: 1px solid #8a8a8a; }
.more { margin-left: 17px; }
.winctl { display: flex; flex: none; width: 267px; padding-left: 56px; background: #fff; }
.winctl button { width: 70px; }
.tabs { display: flex; padding: 3px 0 0 12px; color: #cfcfcf; }
.tabs button { padding: 0 15px; height: 25px; white-space: nowrap; }
.tabs .on {
  background: linear-gradient(#6c6c6c, #595959);
  color: #fff;
  border: 1px solid #303030;
  border-bottom: 0;
  padding: 0 14px;
  margin-right: 3px;
}
.tabs .fold { margin-left: 18px; gap: 6px; }

/* Ribbon */
.ribbon {
  display: flex;
  height: 145px;
  padding-left: 2px;
  gap: 2px;
  background: linear-gradient(#4c4c4c, #373737);
}
.panel {
  display: flex;
  flex-direction: column;
  flex: none;
  background: #5b5b5b;
  border-right: 1px solid #3a3a3a;
}
.body { display: flex; height: 117px; padding-top: 4px; }
.panel h2 {
  position: relative;
  margin: 0 2px;
  height: 28px;
  display: flex;
  align-items: center;
  justify-content: center;
  gap: 10px;
  font-size: 18px;
  font-weight: 350;
  background: #4d4d4d;
}
.panel .tight { padding-right: 20px; }
.launch { position: absolute; right: 4px; }
.big { flex-direction: column; justify-content: flex-start; width: 78px; padding-top: 5px; line-height: 24px; white-space: nowrap; }
.big span { padding-top: 6px; }
.big .caret { margin-top: 5px; }
.icons { display: grid; grid-template-rows: 36px 36px 36px; align-content: start; }
.icons.c1 { grid-template-columns: 36px; }
.line svg { fill: none; stroke: #d8d8d8; }
.line .pt { fill: #7fc0fb; stroke: none; }
.p-model { width: 201px; }
.p-model .body { padding-left: 7px; }
.p-model .c1 { margin-left: 4px; }
.p-mesh { width: 101px; }
.p-mesh .big { width: 60px; }
.p-solid { width: 139px; }
.p-solid .icons { grid-template-columns: 44px 38px 36px 18px; }
.p-draw { width: 139px; padding-left: 4px; }
.p-draw .icons { grid-template-columns: 36px 36px 46px 8px; }
.p-modify { width: 216px; }
.p-modify .icons { grid-template-columns: 42px 40px 34px 48px 26px 24px; }
.p-section { width: 89px; }
.p-section .big { width: 88px; }
.p-section h2 { justify-content: flex-start; padding-left: 5px; }
.p-ucs { width: 216px; }
.p-ucs .icons { grid-template-columns: 44px 4px 64px 20px 52px 20px; }
.p-ucs .icons > .combo { grid-column: 3 / 7; margin-left: 14px; width: 150px; }
.p-view { width: 156px; }
.p-select { width: 255px; }
.p-base { width: 91px; }
.p-base .big { width: 90px; }
.p-base h2 { justify-content: flex-start; padding-left: 6px; }

.combo {
  position: relative;
  display: flex;
  align-items: center;
  height: 34px;
  border: 2px solid #3a3a3a;
  background: linear-gradient(#4d4d4d, #686868);
}
.combo svg { position: absolute; left: 3px; pointer-events: none; }
.combo .caret { position: absolute; right: 3px; pointer-events: none; }
.combo select {
  appearance: none;
  border: 0;
  background: none;
  width: 100%;
  height: 30px;
  padding: 0 0 0 30px;
}
.stack { flex-direction: column; gap: 2px; padding: 6px 2px 0 1px; }
.vp { width: 56px; height: 36px; gap: 9px; }

.p-select .body { padding-left: 2px; }
.p-select .on {
  width: 58px;
  height: 107px;
  border: 2px solid #33406f;
  padding-top: 3px;
  background: linear-gradient(#84a4dc, #486796);
}
.p-select .big:nth-child(2) { width: 104px; }
.p-select .gizmo { position: relative; width: 88px; }
.gizmo .caret { position: absolute; right: 4px; top: 78px; }

.folded {
  width: 90px;
  height: 144px;
  margin-top: 1px;
  padding: 5px 0 6px;
  justify-content: flex-start;
  border: 2px solid #2f2f2f;
  background: linear-gradient(#6c6c6c, #505050);
}
.folded span { padding-top: 4px; }
.folded .caret { margin-top: auto; }

/* Document tabs */
.doctabs {
  display: flex;
  align-items: flex-start;
  height: 46px;
  padding: 5px 0 0 22px;
  border-top: 3px solid #868686;
  border-bottom: 6px solid #5c5c5c;
  background: #373737;
  color: #a9a9a9;
}
.dt {
  display: flex;
  align-items: center;
  height: 32px;
  width: 204px;
  margin-right: -16px;
  padding-left: 24px;
  background: #515151;
  clip-path: path("M0 32Q8 31 12 18T26 0H180Q192 0 195 14T204 32Z");
}
.dt b { margin-left: auto; font: 700 17px/18px "DejaVu Sans", sans-serif; color: #2e2e2e; }
.second { width: 199px; padding: 0 25px 0 22px; clip-path: path("M0 32Q8 31 12 18T26 0H175Q187 0 190 14T199 32Z"); }
.third { width: 238px; padding: 0 24px 0 22px; margin-right: 0; clip-path: path("M0 32Q8 31 12 18T26 0H206Q218 0 222 14T238 32Z"); }
.dt.on { background: linear-gradient(#8a8a8a, #5e5e5e); color: #fff; }
.plus {
  width: 34px;
  height: 24px;
  margin: 5px 0 0 6px;
  background: #525252;
  border-radius: 4px 16px 4px 16px;
  font-size: 24px;
  font-weight: 700;
  color: #c8c8c8;
}

/* Drawing area */
.view { position: relative; flex: 1 0 707px; background: #212631; overflow: hidden; }
.canvas { position: absolute; inset: 0 14px 0 0; width: calc(100% - 14px); height: 100%; }
.edge { position: absolute; inset: 0 0 0 auto; width: 14px; background: linear-gradient(90deg, #aecbee 10px, #1d2026 10px 12px, #6d6a6c 12px); }
.face text { font: 300 67px "Noto Sans CJK SC", sans-serif; fill: none; stroke: #fff; stroke-width: 1.5; }
.dim text { font: 32px "Liberation Sans Narrow", "DejaVu Sans Condensed", sans-serif; fill: #fff; stroke: #fff; stroke-width: 1; }
.ghost { font: 64px "Noto Sans CJK SC", sans-serif; fill: #31363f; }
.axis { font: 300 26px "Open Sans", sans-serif; }
.vlabel { position: absolute; left: 1px; top: 6px; display: flex; font-size: 19px; }
.vlabel em { font-style: normal; color: #d9d03a; }
.vctl { position: absolute; right: 26px; top: 11px; display: flex; gap: 14px; }
.cursor { position: absolute; left: 72px; top: 19px; }

.cmd {
  position: absolute;
  left: 20%;
  bottom: 1px;
  width: 60%;
  height: 38px;
  display: flex;
  align-items: stretch;
  background: #bdbec0;
  border: 2px solid #666a70;
  border-radius: 4px;
}
.cmd-tools { display: flex; align-items: center; gap: 9px; width: 79px; padding-left: 9px; background: linear-gradient(#606060, #3c3c3c); }
.prompt { gap: 5px; padding: 0 14px 0 7px; }
.cmd input { flex: 1; min-width: 0; border: 0; background: none; padding: 0; font-size: 19px; font-style: italic; }
.cmd input::placeholder { color: #555; opacity: 1; }
.hist { padding: 0 4px; }

.ime {
  position: absolute;
  right: 14px;
  bottom: 96px;
  width: 294px;
  height: 37px;
  display: flex;
  align-items: center;
  gap: 13px;
  background: #fff;
  color: #1f6dbb;
  padding: 0 8px 0 0;
}
.ime b { font-size: 22px; font-weight: 700; }
.sogou { margin: 0 -6px 0 -18px; }
.net {
  position: absolute;
  right: 60px;
  bottom: 58px;
  width: 120px;
  height: 63px;
  padding: 0 0 0 16px;
  border-radius: 32px 0 0 32px;
  background: #242733ee;
  color: #b8bac4;
  font-size: 16px;
}
.net p { display: flex; align-items: center; height: 32px; }
.net b { margin: 0 2px 0 22px; font-size: 18px; font-weight: 700; color: #e4e4ee; }
.load { position: absolute; right: 3px; bottom: 46px; width: 88px; height: 88px; display: flex; align-items: center; justify-content: center; }
.load svg { position: absolute; }
.load p { position: relative; font-size: 36px; font-weight: 300; color: #dfe0ea; }
.load small { font-size: 18px; }

/* Layout tabs */
.layouts {
  display: flex;
  height: 30px;
  padding-left: 11px;
  border-top: 2px solid #5c5c5c;
  background: #373737;
  color: #a9a9a9;
}
.layouts a {
  display: flex;
  align-items: center;
  justify-content: center;
  width: 88px;
  height: 26px;
  margin-right: -6px;
  background: #515151;
  clip-path: path("M0 0Q8 2 11 12T20 26H68Q74 24 77 12T88 0Z");
}
.layouts .on {
  width: 80px;
  margin-right: -9px;
  background: linear-gradient(#5c5c5c, #858585);
  color: #fff;
  font-weight: 700;
  clip-path: path("M0 0Q8 2 11 12T20 26H60Q66 24 69 12T80 0Z");
}
.layouts button {
  width: 34px;
  height: 24px;
  margin-left: 9px;
  background: #525252;
  border-radius: 16px 4px 16px 4px;
  font-size: 24px;
  font-weight: 700;
  color: #c8c8c8;
}

/* Status bar */
.status { display: flex; gap: 2px; height: 38px; padding-left: 58px; background: #3a3a3a; font-weight: 400; }
.grp { display: flex; flex: none; border: 2px solid #767676; border-bottom: 0; background: #4c4c4c; padding-top: 3px; }
.grp button { width: 34px; }
.grp .on { background: #5f8cc4; }
.grp .w22 { width: 22px; }
.grp .w24 { width: 24px; }
.grp .w36 { width: 36px; }
.grp .w38 { width: 38px; }
.grp .sepl { border-left: 2px solid #767676; }
.grp .txt { width: 41px; font-weight: 700; }
.grp .trust { width: 42px; }
.coords { width: 276px; justify-content: flex-end; align-items: center; padding-right: 8px; color: #a9a9a9; font-size: 17px; white-space: nowrap; }
.grp .scale { width: 107px; gap: 6px; font-size: 17px; white-space: nowrap; }
.last { border-right: 0; flex: 1; }
.units { display: flex; align-items: center; width: 146px; padding: 0 5px 0 11px; }
.units select { appearance: none; border: 0; background: none; flex: 1; padding: 0 0 0 20px; font-size: 18px; }
```
